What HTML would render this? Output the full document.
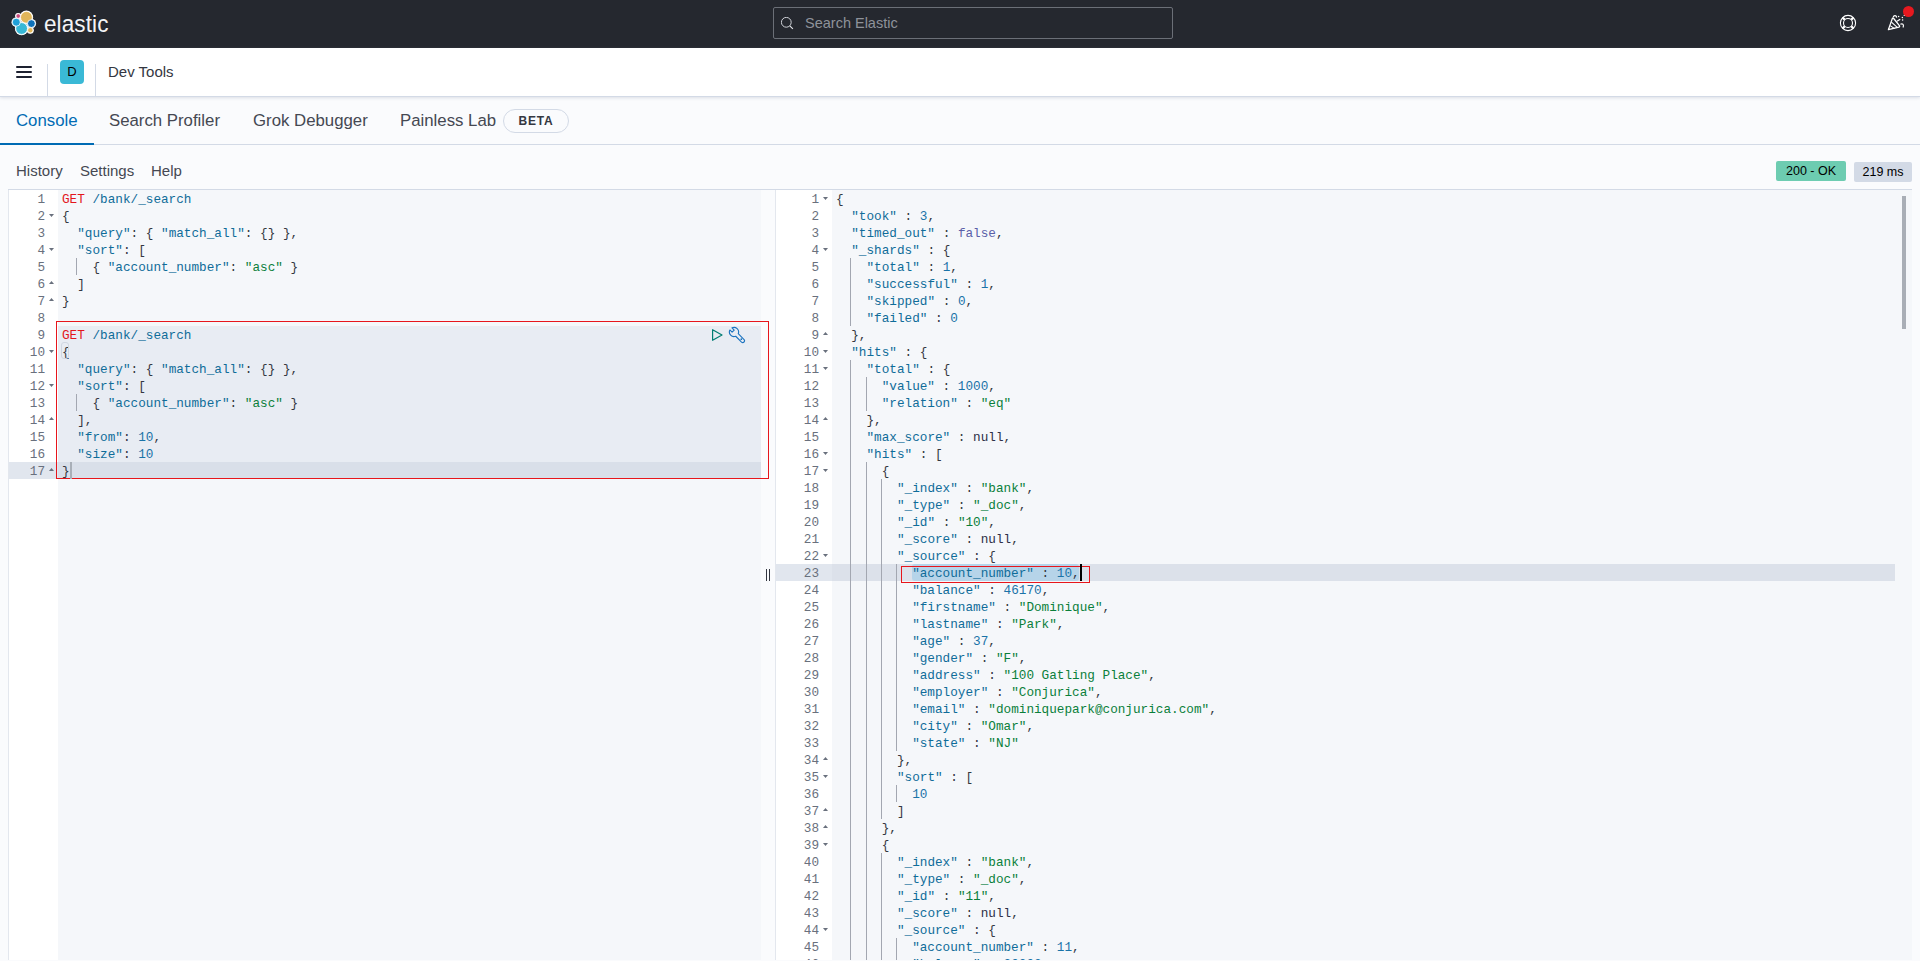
<!DOCTYPE html>
<html><head><meta charset="utf-8">
<style>
*{box-sizing:border-box}
html,body{margin:0;padding:0;width:1920px;height:961px;overflow:hidden;background:#FAFBFD;font-family:"Liberation Sans",sans-serif;color:#343741}
.a{position:absolute}
#hdr{position:absolute;left:0;top:0;width:1920px;height:48px;background:#25282F}
#logotext{position:absolute;left:44px;top:9px;font-size:22.5px;color:#F4F4F6;letter-spacing:0.1px;line-height:28px;transform:scaleY(1.08);transform-origin:0 0}
#search{position:absolute;left:773px;top:7px;width:400px;height:32px;border:1px solid #6B6F77;border-radius:2px;background:#25282F}
#search span{position:absolute;left:31px;top:7px;font-size:14.5px;color:#8E929A;line-height:17px}
#crumbs{position:absolute;left:0;top:48px;width:1920px;height:49px;background:#fff;border-bottom:1px solid #D3DAE6;box-shadow:0 1px 3px rgba(152,162,179,.3)}
.tab{position:absolute;top:110px;font-size:16.8px;line-height:22px;color:#454852}
.menu{position:absolute;top:161px;font-size:15px;line-height:20px;color:#454852}
/* editor */
.bgc{position:absolute}
.ln{position:absolute;height:18px;line-height:17px;font-family:"Liberation Mono",monospace;font-size:12.7px;padding-top:1px;color:#69707D;text-align:right;white-space:pre}
.cl{position:absolute;height:18px;line-height:17px;font-family:"Liberation Mono",monospace;font-size:12.7px;padding-top:1px;color:#343741;white-space:pre}
.cl i{font-style:normal}
.k{color:#0F6C99}
.s{color:#0A7F3A}
.n{color:#1A73A8}
.b{color:#5A5FA8}
.nl{color:#2D3048}
.m{color:#E3161C}
.u{color:#0F6C99}
.p{color:#343741}
.ig{position:absolute;width:1px;height:17px;background:#A3A7B1}
.fw{position:absolute;width:5px;height:3px;background:#69707D}
.fw.d{clip-path:polygon(0 0,100% 0,50% 100%)}
.fw.u{clip-path:polygon(50% 0,100% 100%,0 100%)}
</style></head><body>
<div id="hdr">
  <svg class="a" style="left:11px;top:10px" width="27" height="27" viewBox="0 0 27 27"><circle cx="15.4" cy="7.3" r="6.7" fill="#fff"/><circle cx="10.6" cy="18.5" r="6.7" fill="#fff"/><circle cx="5.3" cy="12.2" r="4.8" fill="#fff"/><circle cx="20.4" cy="13.6" r="4.7" fill="#fff"/><circle cx="19.3" cy="20.2" r="3.5" fill="#fff"/><circle cx="7.2" cy="6.0" r="3.1" fill="#fff"/><circle cx="15.4" cy="7.3" r="5.9" fill="#E1B65A" stroke="#fff" stroke-width="0.8"/><circle cx="10.6" cy="18.5" r="5.9" fill="#38B8D6" stroke="#fff" stroke-width="0.8"/><circle cx="5.3" cy="12.2" r="4.0" fill="#1FA0D8" stroke="#fff" stroke-width="0.8"/><circle cx="20.4" cy="13.6" r="3.9" fill="#0E72BA" stroke="#fff" stroke-width="0.8"/><circle cx="19.3" cy="20.2" r="2.7" fill="#E1B65A" stroke="#fff" stroke-width="0.8"/><circle cx="7.2" cy="6.0" r="2.3" fill="#C8497C" stroke="#fff" stroke-width="0.8"/></svg>
  <div id="logotext">elastic</div>
  <div id="search">
    <svg class="a" style="left:7px;top:9px" width="14" height="14" viewBox="0 0 14 14"><circle cx="5.3" cy="5.3" r="4.9" fill="none" stroke="#CFD2D8" stroke-width="1"/><path d="M8.8 8.8L11.9 11.9" stroke="#E6E8EC" stroke-width="1.1"/></svg>
    <span>Search Elastic</span>
  </div>
  <svg class="a" style="left:1839px;top:14px" width="18" height="18" viewBox="0 0 18 18">
    <circle cx="9" cy="9" r="7.6" fill="none" stroke="#fff" stroke-width="1.1"/>
    <circle cx="9" cy="9" r="4.5" fill="none" stroke="#fff" stroke-width="1.1"/>
    <path d="M3.6 3.6L5.8 5.8M14.4 3.6L12.2 5.8M3.6 14.4L5.8 12.2M14.4 14.4L12.2 12.2" stroke="#fff" stroke-width="2.3"/>
  </svg>
  <svg class="a" style="left:1887px;top:13px" width="20" height="20" viewBox="0 0 20 20">
    <path d="M1.4 16.6L5.2 5.9Q5.8 4.7 6.7 5.5L12.4 12.6Q13 13.6 11.9 14.1Z" fill="none" stroke="#fff" stroke-width="1.3" stroke-linejoin="round"/>
    <path d="M3.2 12.6L7.6 15.6M4.4 9.2L10 14.2" stroke="#fff" stroke-width="1.1"/>
    <path d="M6.2 4.6C6.2 2.4 9.4 1.6 9.6 4.6" fill="none" stroke="#fff" stroke-width="1.2"/>
    <path d="M13.4 11.2C15.6 10 17.4 11.8 16 14.6" fill="none" stroke="#fff" stroke-width="1.2"/>
    <path d="M10 8.2L13.2 6.2" stroke="#fff" stroke-width="1.2"/>
    <circle cx="11.6" cy="3.4" r=".75" fill="#fff"/><circle cx="15.4" cy="4.6" r=".75" fill="#fff"/><circle cx="17.3" cy="2.4" r=".7" fill="#fff"/><circle cx="15.6" cy="7" r=".75" fill="#fff"/>
  </svg>
  <div class="a" style="left:1903px;top:6px;width:11px;height:11px;border-radius:50%;background:#E7191F"></div>
</div>

<div id="crumbs">
  <div class="a" style="left:16px;top:18px;width:16px;height:2px;background:#1D2130;border-radius:1px"></div>
  <div class="a" style="left:16px;top:23px;width:16px;height:2px;background:#1D2130;border-radius:1px"></div>
  <div class="a" style="left:16px;top:28px;width:16px;height:2px;background:#1D2130;border-radius:1px"></div>
  <div class="a" style="left:47px;top:16px;width:1px;height:32px;background:#D3DAE6"></div>
  <div class="a" style="left:60px;top:12px;width:24px;height:24px;border-radius:4px;background:#3AB9D6;color:#000;font-size:13px;text-align:center;line-height:24px">D</div>
  <div class="a" style="left:95px;top:16px;width:1px;height:32px;background:#D3DAE6"></div>
  <div class="a" style="left:108px;top:14px;font-size:15px;line-height:20px;color:#343741">Dev Tools</div>
</div>

<!-- tabs -->
<div class="a" style="left:0;top:144px;width:1920px;height:1px;background:#D3DAE6"></div>
<div class="a" style="left:0;top:143px;width:94px;height:2px;background:#006BB4"></div>
<div class="tab" style="left:16px;color:#006BB4">Console</div>
<div class="tab" style="left:109px">Search Profiler</div>
<div class="tab" style="left:253px">Grok Debugger</div>
<div class="tab" style="left:400px">Painless Lab</div>
<div class="a" style="left:503px;top:109px;width:66px;height:24px;border:1px solid #D3DAE6;border-radius:12px;font-size:12px;font-weight:bold;letter-spacing:0.8px;text-align:center;line-height:22px;color:#343741">BETA</div>

<div class="menu" style="left:16px">History</div>
<div class="menu" style="left:80px">Settings</div>
<div class="menu" style="left:151px">Help</div>

<div class="a" style="left:1776px;top:161px;width:70px;height:20px;background:#6DCCB1;border-radius:2px;font-size:12.5px;line-height:20px;text-align:center;color:#000">200 - OK</div>
<div class="a" style="left:1854px;top:162px;width:58px;height:20px;background:#D3DAE6;border-radius:2px;font-size:12.5px;line-height:20px;text-align:center;color:#000">219 ms</div>

<!-- editor frame -->
<div class="a" style="left:8px;top:189px;width:1904px;height:1px;background:#D3DAE6"></div>
<div class="a" style="left:8px;top:190px;width:1px;height:770px;background:#E3E7EE"></div>
<div class="a" style="left:9px;top:190px;width:49px;height:770px;background:#fff"></div>
<div class="a" style="left:58px;top:190px;width:703px;height:770px;background:#F5F7FA"></div>
<div class="a" style="left:775px;top:190px;width:1px;height:770px;background:#E3E7EE"></div>
<div class="a" style="left:776px;top:190px;width:56px;height:770px;background:#fff"></div>
<div class="a" style="left:832px;top:190px;width:1080px;height:770px;background:#F5F7FA"></div>

<!-- left highlights -->
<div class="a" style="left:58px;top:326px;width:703px;height:153px;background:#E8ECF3"></div>
<div class="a" style="left:9px;top:462px;width:49px;height:17px;background:#E1E6EE"></div>
<div class="a" style="left:58px;top:462px;width:703px;height:17px;background:#D9DFE9"></div>

<!-- right highlights -->
<div class="a" style="left:776px;top:564px;width:56px;height:17px;background:#E1E6EE"></div>
<div class="a" style="left:832px;top:564px;width:1063px;height:17px;background:#DCE1EA"></div>
<div class="a" style="left:912px;top:564px;width:167px;height:17px;background:#B6D4E9;border-radius:3px"></div>

<div style="position:absolute;left:0;top:0;width:1920px;height:960px;overflow:hidden">
<div class="ln" style="top:190px;right:1875px">1</div>
<div class="cl" style="top:190px;left:62px"><i class="m">GET</i> <i class="u">/bank/_search</i></div>
<div class="ln" style="top:207px;right:1875px">2</div>
<div class="fw d" style="top:214px;left:49px"></div>
<div class="cl" style="top:207px;left:62px"><i class="p">{</i></div>
<div class="ln" style="top:224px;right:1875px">3</div>
<div class="cl" style="top:224px;left:62px">  <i class="k">&quot;query&quot;</i><i class="p">:</i> <i class="p">{</i> <i class="k">&quot;match_all&quot;</i><i class="p">:</i> <i class="p">{</i><i class="p">}</i> <i class="p">}</i><i class="p">,</i></div>
<div class="ln" style="top:241px;right:1875px">4</div>
<div class="fw d" style="top:248px;left:49px"></div>
<div class="cl" style="top:241px;left:62px">  <i class="k">&quot;sort&quot;</i><i class="p">:</i> <i class="p">[</i></div>
<div class="ln" style="top:258px;right:1875px">5</div>
<div class="ig" style="top:258px;left:76px"></div>
<div class="cl" style="top:258px;left:62px">    <i class="p">{</i> <i class="k">&quot;account_number&quot;</i><i class="p">:</i> <i class="s">&quot;asc&quot;</i> <i class="p">}</i></div>
<div class="ln" style="top:275px;right:1875px">6</div>
<div class="fw u" style="top:281px;left:49px"></div>
<div class="cl" style="top:275px;left:62px">  <i class="p">]</i></div>
<div class="ln" style="top:292px;right:1875px">7</div>
<div class="fw u" style="top:298px;left:49px"></div>
<div class="cl" style="top:292px;left:62px"><i class="p">}</i></div>
<div class="ln" style="top:309px;right:1875px">8</div>
<div class="cl" style="top:309px;left:62px"></div>
<div class="ln" style="top:326px;right:1875px">9</div>
<div class="cl" style="top:326px;left:62px"><i class="m">GET</i> <i class="u">/bank/_search</i></div>
<div class="ln" style="top:343px;right:1875px">10</div>
<div class="fw d" style="top:350px;left:49px"></div>
<div class="cl" style="top:343px;left:62px"><i class="p">{</i></div>
<div class="ln" style="top:360px;right:1875px">11</div>
<div class="cl" style="top:360px;left:62px">  <i class="k">&quot;query&quot;</i><i class="p">:</i> <i class="p">{</i> <i class="k">&quot;match_all&quot;</i><i class="p">:</i> <i class="p">{</i><i class="p">}</i> <i class="p">}</i><i class="p">,</i></div>
<div class="ln" style="top:377px;right:1875px">12</div>
<div class="fw d" style="top:384px;left:49px"></div>
<div class="cl" style="top:377px;left:62px">  <i class="k">&quot;sort&quot;</i><i class="p">:</i> <i class="p">[</i></div>
<div class="ln" style="top:394px;right:1875px">13</div>
<div class="ig" style="top:394px;left:76px"></div>
<div class="cl" style="top:394px;left:62px">    <i class="p">{</i> <i class="k">&quot;account_number&quot;</i><i class="p">:</i> <i class="s">&quot;asc&quot;</i> <i class="p">}</i></div>
<div class="ln" style="top:411px;right:1875px">14</div>
<div class="fw u" style="top:417px;left:49px"></div>
<div class="cl" style="top:411px;left:62px">  <i class="p">]</i><i class="p">,</i></div>
<div class="ln" style="top:428px;right:1875px">15</div>
<div class="cl" style="top:428px;left:62px">  <i class="k">&quot;from&quot;</i><i class="p">:</i> <i class="n">10</i><i class="p">,</i></div>
<div class="ln" style="top:445px;right:1875px">16</div>
<div class="cl" style="top:445px;left:62px">  <i class="k">&quot;size&quot;</i><i class="p">:</i> <i class="n">10</i></div>
<div class="ln" style="top:462px;right:1875px">17</div>
<div class="fw u" style="top:468px;left:49px"></div>
<div class="cl" style="top:462px;left:62px"><i class="p">}</i></div>
<div class="ln" style="top:190px;right:1101px">1</div>
<div class="fw d" style="top:197px;left:823px"></div>
<div class="cl" style="top:190px;left:836px"><i class="p">{</i></div>
<div class="ln" style="top:207px;right:1101px">2</div>
<div class="cl" style="top:207px;left:836px">  <i class="k">&quot;took&quot;</i> <i class="p">:</i> <i class="n">3</i><i class="p">,</i></div>
<div class="ln" style="top:224px;right:1101px">3</div>
<div class="cl" style="top:224px;left:836px">  <i class="k">&quot;timed_out&quot;</i> <i class="p">:</i> <i class="b">false</i><i class="p">,</i></div>
<div class="ln" style="top:241px;right:1101px">4</div>
<div class="fw d" style="top:248px;left:823px"></div>
<div class="cl" style="top:241px;left:836px">  <i class="k">&quot;_shards&quot;</i> <i class="p">:</i> <i class="p">{</i></div>
<div class="ln" style="top:258px;right:1101px">5</div>
<div class="ig" style="top:258px;left:850px"></div>
<div class="cl" style="top:258px;left:836px">    <i class="k">&quot;total&quot;</i> <i class="p">:</i> <i class="n">1</i><i class="p">,</i></div>
<div class="ln" style="top:275px;right:1101px">6</div>
<div class="ig" style="top:275px;left:850px"></div>
<div class="cl" style="top:275px;left:836px">    <i class="k">&quot;successful&quot;</i> <i class="p">:</i> <i class="n">1</i><i class="p">,</i></div>
<div class="ln" style="top:292px;right:1101px">7</div>
<div class="ig" style="top:292px;left:850px"></div>
<div class="cl" style="top:292px;left:836px">    <i class="k">&quot;skipped&quot;</i> <i class="p">:</i> <i class="n">0</i><i class="p">,</i></div>
<div class="ln" style="top:309px;right:1101px">8</div>
<div class="ig" style="top:309px;left:850px"></div>
<div class="cl" style="top:309px;left:836px">    <i class="k">&quot;failed&quot;</i> <i class="p">:</i> <i class="n">0</i></div>
<div class="ln" style="top:326px;right:1101px">9</div>
<div class="fw u" style="top:332px;left:823px"></div>
<div class="cl" style="top:326px;left:836px">  <i class="p">}</i><i class="p">,</i></div>
<div class="ln" style="top:343px;right:1101px">10</div>
<div class="fw d" style="top:350px;left:823px"></div>
<div class="cl" style="top:343px;left:836px">  <i class="k">&quot;hits&quot;</i> <i class="p">:</i> <i class="p">{</i></div>
<div class="ln" style="top:360px;right:1101px">11</div>
<div class="fw d" style="top:367px;left:823px"></div>
<div class="ig" style="top:360px;left:850px"></div>
<div class="cl" style="top:360px;left:836px">    <i class="k">&quot;total&quot;</i> <i class="p">:</i> <i class="p">{</i></div>
<div class="ln" style="top:377px;right:1101px">12</div>
<div class="ig" style="top:377px;left:850px"></div>
<div class="ig" style="top:377px;left:866px"></div>
<div class="cl" style="top:377px;left:836px">      <i class="k">&quot;value&quot;</i> <i class="p">:</i> <i class="n">1000</i><i class="p">,</i></div>
<div class="ln" style="top:394px;right:1101px">13</div>
<div class="ig" style="top:394px;left:850px"></div>
<div class="ig" style="top:394px;left:866px"></div>
<div class="cl" style="top:394px;left:836px">      <i class="k">&quot;relation&quot;</i> <i class="p">:</i> <i class="s">&quot;eq&quot;</i></div>
<div class="ln" style="top:411px;right:1101px">14</div>
<div class="fw u" style="top:417px;left:823px"></div>
<div class="ig" style="top:411px;left:850px"></div>
<div class="cl" style="top:411px;left:836px">    <i class="p">}</i><i class="p">,</i></div>
<div class="ln" style="top:428px;right:1101px">15</div>
<div class="ig" style="top:428px;left:850px"></div>
<div class="cl" style="top:428px;left:836px">    <i class="k">&quot;max_score&quot;</i> <i class="p">:</i> <i class="nl">null</i><i class="p">,</i></div>
<div class="ln" style="top:445px;right:1101px">16</div>
<div class="fw d" style="top:452px;left:823px"></div>
<div class="ig" style="top:445px;left:850px"></div>
<div class="cl" style="top:445px;left:836px">    <i class="k">&quot;hits&quot;</i> <i class="p">:</i> <i class="p">[</i></div>
<div class="ln" style="top:462px;right:1101px">17</div>
<div class="fw d" style="top:469px;left:823px"></div>
<div class="ig" style="top:462px;left:850px"></div>
<div class="ig" style="top:462px;left:866px"></div>
<div class="cl" style="top:462px;left:836px">      <i class="p">{</i></div>
<div class="ln" style="top:479px;right:1101px">18</div>
<div class="ig" style="top:479px;left:850px"></div>
<div class="ig" style="top:479px;left:866px"></div>
<div class="ig" style="top:479px;left:881px"></div>
<div class="cl" style="top:479px;left:836px">        <i class="k">&quot;_index&quot;</i> <i class="p">:</i> <i class="s">&quot;bank&quot;</i><i class="p">,</i></div>
<div class="ln" style="top:496px;right:1101px">19</div>
<div class="ig" style="top:496px;left:850px"></div>
<div class="ig" style="top:496px;left:866px"></div>
<div class="ig" style="top:496px;left:881px"></div>
<div class="cl" style="top:496px;left:836px">        <i class="k">&quot;_type&quot;</i> <i class="p">:</i> <i class="s">&quot;_doc&quot;</i><i class="p">,</i></div>
<div class="ln" style="top:513px;right:1101px">20</div>
<div class="ig" style="top:513px;left:850px"></div>
<div class="ig" style="top:513px;left:866px"></div>
<div class="ig" style="top:513px;left:881px"></div>
<div class="cl" style="top:513px;left:836px">        <i class="k">&quot;_id&quot;</i> <i class="p">:</i> <i class="s">&quot;10&quot;</i><i class="p">,</i></div>
<div class="ln" style="top:530px;right:1101px">21</div>
<div class="ig" style="top:530px;left:850px"></div>
<div class="ig" style="top:530px;left:866px"></div>
<div class="ig" style="top:530px;left:881px"></div>
<div class="cl" style="top:530px;left:836px">        <i class="k">&quot;_score&quot;</i> <i class="p">:</i> <i class="nl">null</i><i class="p">,</i></div>
<div class="ln" style="top:547px;right:1101px">22</div>
<div class="fw d" style="top:554px;left:823px"></div>
<div class="ig" style="top:547px;left:850px"></div>
<div class="ig" style="top:547px;left:866px"></div>
<div class="ig" style="top:547px;left:881px"></div>
<div class="cl" style="top:547px;left:836px">        <i class="k">&quot;_source&quot;</i> <i class="p">:</i> <i class="p">{</i></div>
<div class="ln" style="top:564px;right:1101px">23</div>
<div class="ig" style="top:564px;left:850px"></div>
<div class="ig" style="top:564px;left:866px"></div>
<div class="ig" style="top:564px;left:881px"></div>
<div class="ig" style="top:564px;left:896px"></div>
<div class="cl" style="top:564px;left:836px">          <i class="k">&quot;account_number&quot;</i> <i class="p">:</i> <i class="n">10</i><i class="p">,</i></div>
<div class="ln" style="top:581px;right:1101px">24</div>
<div class="ig" style="top:581px;left:850px"></div>
<div class="ig" style="top:581px;left:866px"></div>
<div class="ig" style="top:581px;left:881px"></div>
<div class="ig" style="top:581px;left:896px"></div>
<div class="cl" style="top:581px;left:836px">          <i class="k">&quot;balance&quot;</i> <i class="p">:</i> <i class="n">46170</i><i class="p">,</i></div>
<div class="ln" style="top:598px;right:1101px">25</div>
<div class="ig" style="top:598px;left:850px"></div>
<div class="ig" style="top:598px;left:866px"></div>
<div class="ig" style="top:598px;left:881px"></div>
<div class="ig" style="top:598px;left:896px"></div>
<div class="cl" style="top:598px;left:836px">          <i class="k">&quot;firstname&quot;</i> <i class="p">:</i> <i class="s">&quot;Dominique&quot;</i><i class="p">,</i></div>
<div class="ln" style="top:615px;right:1101px">26</div>
<div class="ig" style="top:615px;left:850px"></div>
<div class="ig" style="top:615px;left:866px"></div>
<div class="ig" style="top:615px;left:881px"></div>
<div class="ig" style="top:615px;left:896px"></div>
<div class="cl" style="top:615px;left:836px">          <i class="k">&quot;lastname&quot;</i> <i class="p">:</i> <i class="s">&quot;Park&quot;</i><i class="p">,</i></div>
<div class="ln" style="top:632px;right:1101px">27</div>
<div class="ig" style="top:632px;left:850px"></div>
<div class="ig" style="top:632px;left:866px"></div>
<div class="ig" style="top:632px;left:881px"></div>
<div class="ig" style="top:632px;left:896px"></div>
<div class="cl" style="top:632px;left:836px">          <i class="k">&quot;age&quot;</i> <i class="p">:</i> <i class="n">37</i><i class="p">,</i></div>
<div class="ln" style="top:649px;right:1101px">28</div>
<div class="ig" style="top:649px;left:850px"></div>
<div class="ig" style="top:649px;left:866px"></div>
<div class="ig" style="top:649px;left:881px"></div>
<div class="ig" style="top:649px;left:896px"></div>
<div class="cl" style="top:649px;left:836px">          <i class="k">&quot;gender&quot;</i> <i class="p">:</i> <i class="s">&quot;F&quot;</i><i class="p">,</i></div>
<div class="ln" style="top:666px;right:1101px">29</div>
<div class="ig" style="top:666px;left:850px"></div>
<div class="ig" style="top:666px;left:866px"></div>
<div class="ig" style="top:666px;left:881px"></div>
<div class="ig" style="top:666px;left:896px"></div>
<div class="cl" style="top:666px;left:836px">          <i class="k">&quot;address&quot;</i> <i class="p">:</i> <i class="s">&quot;100 Gatling Place&quot;</i><i class="p">,</i></div>
<div class="ln" style="top:683px;right:1101px">30</div>
<div class="ig" style="top:683px;left:850px"></div>
<div class="ig" style="top:683px;left:866px"></div>
<div class="ig" style="top:683px;left:881px"></div>
<div class="ig" style="top:683px;left:896px"></div>
<div class="cl" style="top:683px;left:836px">          <i class="k">&quot;employer&quot;</i> <i class="p">:</i> <i class="s">&quot;Conjurica&quot;</i><i class="p">,</i></div>
<div class="ln" style="top:700px;right:1101px">31</div>
<div class="ig" style="top:700px;left:850px"></div>
<div class="ig" style="top:700px;left:866px"></div>
<div class="ig" style="top:700px;left:881px"></div>
<div class="ig" style="top:700px;left:896px"></div>
<div class="cl" style="top:700px;left:836px">          <i class="k">&quot;email&quot;</i> <i class="p">:</i> <i class="s">&quot;dominiquepark@conjurica.com&quot;</i><i class="p">,</i></div>
<div class="ln" style="top:717px;right:1101px">32</div>
<div class="ig" style="top:717px;left:850px"></div>
<div class="ig" style="top:717px;left:866px"></div>
<div class="ig" style="top:717px;left:881px"></div>
<div class="ig" style="top:717px;left:896px"></div>
<div class="cl" style="top:717px;left:836px">          <i class="k">&quot;city&quot;</i> <i class="p">:</i> <i class="s">&quot;Omar&quot;</i><i class="p">,</i></div>
<div class="ln" style="top:734px;right:1101px">33</div>
<div class="ig" style="top:734px;left:850px"></div>
<div class="ig" style="top:734px;left:866px"></div>
<div class="ig" style="top:734px;left:881px"></div>
<div class="ig" style="top:734px;left:896px"></div>
<div class="cl" style="top:734px;left:836px">          <i class="k">&quot;state&quot;</i> <i class="p">:</i> <i class="s">&quot;NJ&quot;</i></div>
<div class="ln" style="top:751px;right:1101px">34</div>
<div class="fw u" style="top:757px;left:823px"></div>
<div class="ig" style="top:751px;left:850px"></div>
<div class="ig" style="top:751px;left:866px"></div>
<div class="ig" style="top:751px;left:881px"></div>
<div class="cl" style="top:751px;left:836px">        <i class="p">}</i><i class="p">,</i></div>
<div class="ln" style="top:768px;right:1101px">35</div>
<div class="fw d" style="top:775px;left:823px"></div>
<div class="ig" style="top:768px;left:850px"></div>
<div class="ig" style="top:768px;left:866px"></div>
<div class="ig" style="top:768px;left:881px"></div>
<div class="cl" style="top:768px;left:836px">        <i class="k">&quot;sort&quot;</i> <i class="p">:</i> <i class="p">[</i></div>
<div class="ln" style="top:785px;right:1101px">36</div>
<div class="ig" style="top:785px;left:850px"></div>
<div class="ig" style="top:785px;left:866px"></div>
<div class="ig" style="top:785px;left:881px"></div>
<div class="ig" style="top:785px;left:896px"></div>
<div class="cl" style="top:785px;left:836px">          <i class="n">10</i></div>
<div class="ln" style="top:802px;right:1101px">37</div>
<div class="fw u" style="top:808px;left:823px"></div>
<div class="ig" style="top:802px;left:850px"></div>
<div class="ig" style="top:802px;left:866px"></div>
<div class="ig" style="top:802px;left:881px"></div>
<div class="cl" style="top:802px;left:836px">        <i class="p">]</i></div>
<div class="ln" style="top:819px;right:1101px">38</div>
<div class="fw u" style="top:825px;left:823px"></div>
<div class="ig" style="top:819px;left:850px"></div>
<div class="ig" style="top:819px;left:866px"></div>
<div class="cl" style="top:819px;left:836px">      <i class="p">}</i><i class="p">,</i></div>
<div class="ln" style="top:836px;right:1101px">39</div>
<div class="fw d" style="top:843px;left:823px"></div>
<div class="ig" style="top:836px;left:850px"></div>
<div class="ig" style="top:836px;left:866px"></div>
<div class="cl" style="top:836px;left:836px">      <i class="p">{</i></div>
<div class="ln" style="top:853px;right:1101px">40</div>
<div class="ig" style="top:853px;left:850px"></div>
<div class="ig" style="top:853px;left:866px"></div>
<div class="ig" style="top:853px;left:881px"></div>
<div class="cl" style="top:853px;left:836px">        <i class="k">&quot;_index&quot;</i> <i class="p">:</i> <i class="s">&quot;bank&quot;</i><i class="p">,</i></div>
<div class="ln" style="top:870px;right:1101px">41</div>
<div class="ig" style="top:870px;left:850px"></div>
<div class="ig" style="top:870px;left:866px"></div>
<div class="ig" style="top:870px;left:881px"></div>
<div class="cl" style="top:870px;left:836px">        <i class="k">&quot;_type&quot;</i> <i class="p">:</i> <i class="s">&quot;_doc&quot;</i><i class="p">,</i></div>
<div class="ln" style="top:887px;right:1101px">42</div>
<div class="ig" style="top:887px;left:850px"></div>
<div class="ig" style="top:887px;left:866px"></div>
<div class="ig" style="top:887px;left:881px"></div>
<div class="cl" style="top:887px;left:836px">        <i class="k">&quot;_id&quot;</i> <i class="p">:</i> <i class="s">&quot;11&quot;</i><i class="p">,</i></div>
<div class="ln" style="top:904px;right:1101px">43</div>
<div class="ig" style="top:904px;left:850px"></div>
<div class="ig" style="top:904px;left:866px"></div>
<div class="ig" style="top:904px;left:881px"></div>
<div class="cl" style="top:904px;left:836px">        <i class="k">&quot;_score&quot;</i> <i class="p">:</i> <i class="nl">null</i><i class="p">,</i></div>
<div class="ln" style="top:921px;right:1101px">44</div>
<div class="fw d" style="top:928px;left:823px"></div>
<div class="ig" style="top:921px;left:850px"></div>
<div class="ig" style="top:921px;left:866px"></div>
<div class="ig" style="top:921px;left:881px"></div>
<div class="cl" style="top:921px;left:836px">        <i class="k">&quot;_source&quot;</i> <i class="p">:</i> <i class="p">{</i></div>
<div class="ln" style="top:938px;right:1101px">45</div>
<div class="ig" style="top:938px;left:850px"></div>
<div class="ig" style="top:938px;left:866px"></div>
<div class="ig" style="top:938px;left:881px"></div>
<div class="ig" style="top:938px;left:896px"></div>
<div class="cl" style="top:938px;left:836px">          <i class="k">&quot;account_number&quot;</i> <i class="p">:</i> <i class="n">11</i><i class="p">,</i></div>
<div class="ln" style="top:955px;right:1101px">46</div>
<div class="ig" style="top:955px;left:850px"></div>
<div class="ig" style="top:955px;left:866px"></div>
<div class="ig" style="top:955px;left:881px"></div>
<div class="ig" style="top:955px;left:896px"></div>
<div class="cl" style="top:955px;left:836px">          <i class="k">&quot;balance&quot;</i> <i class="p">:</i> <i class="n">20203</i><i class="p">,</i></div>
</div>

<!-- red boxes & cursors -->
<div class="a" style="left:61px;top:342px;width:8px;height:17px;border:1px solid #D0D7E1;border-radius:3px"></div>
<div class="a" style="left:56px;top:321px;width:713px;height:158px;border:1px solid #E7161C"></div>
<div class="a" style="left:901px;top:566px;width:189px;height:17px;border:1px solid #E7161C"></div>
<div class="a" style="left:70px;top:462px;width:2px;height:17px;background:#A9AFB8"></div>
<div class="a" style="left:1080px;top:564px;width:2px;height:17px;background:#000"></div>

<!-- action icons -->
<svg class="a" style="left:710px;top:327px" width="14" height="16" viewBox="0 0 14 16"><path d="M2.6 2.7L12 8L2.6 13.3Z" fill="none" stroke="#017D73" stroke-width="1.2" stroke-linejoin="round"/></svg>
<svg class="a" style="left:728px;top:326px" width="18" height="18" viewBox="0 0 18 18"><path d="M10.26 7.72L16.07 13.53A1.8 1.8 0 0 1 13.53 16.07L7.72 10.26A4.6 4.6 0 0 1 1.86 3.98L4.09 6.21L6.21 4.09L3.98 1.86A4.6 4.6 0 0 1 10.26 7.72Z" fill="none" stroke="#1A72BF" stroke-width="1.1" stroke-linejoin="round"/><circle cx="13.3" cy="13.2" r=".85" fill="#1A72BF"/></svg>

<!-- resizer -->
<div class="a" style="left:766px;top:569px;width:1px;height:12px;background:#343741"></div>
<div class="a" style="left:769px;top:569px;width:1px;height:12px;background:#343741"></div>

<!-- scrollbar -->
<div class="a" style="left:1902px;top:196px;width:4px;height:133px;background:#A9AEB6"></div>
</body></html>
